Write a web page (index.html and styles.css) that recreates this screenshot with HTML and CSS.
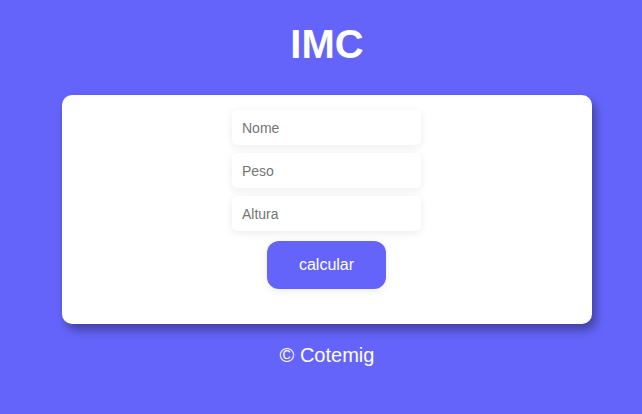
FILE: index.html
```html
<!DOCTYPE html>
<html lang="pt">
<head>
<meta charset="utf-8">
<title>IMC</title>
<link rel="stylesheet" href="styles.css">
</head>
<body>
<div class="page">
  <h1 class="title">IMC</h1>
  <div class="card">
    <form class="form">
      <input class="field" type="text" placeholder="Nome">
      <input class="field" type="text" placeholder="Peso">
      <input class="field" type="text" placeholder="Altura">
      <button class="btn" type="button">calcular</button>
    </form>
  </div>
  <footer class="footer">© Cotemig</footer>
</div>
</body>
</html>
```
FILE: styles.css
```css
html, body {
  margin: 0;
  padding: 0;
  background: #6464fb;
  font-family: "Liberation Sans", Arial, sans-serif;
}
.page {
  padding: 21px 0 0 12px;
  display: flex;
  flex-direction: column;
  align-items: center;
}
.title {
  margin: 0;
  font-size: 40px;
  line-height: 46px;
  font-weight: bold;
  color: #fff;
}
.card {
  margin-top: 28px;
  width: 530px;
  box-sizing: border-box;
  background: #fff;
  border-radius: 10px;
  box-shadow: 4px 6px 10px rgba(0, 0, 0, 0.35);
  padding: 15px 1px 35px 0;
}
.form {
  display: flex;
  flex-direction: column;
  align-items: center;
  gap: 8px;
}
.field {
  width: 189px;
  height: 35px;
  box-sizing: border-box;
  border: none;
  outline: none;
  border-radius: 5px;
  padding: 0 10px;
  font-family: "Liberation Sans", Arial, sans-serif;
  font-size: 14px;
  color: #333;
  background: #fff;
  box-shadow: 0 2px 8px rgba(0, 0, 0, 0.08);
}
.field::placeholder {
  color: #757575;
}
.btn {
  margin-top: 2px;
  width: 119px;
  height: 48px;
  border: none;
  border-radius: 12px;
  background: #6464fb;
  color: #fff;
  font-family: "Liberation Sans", Arial, sans-serif;
  font-size: 16px;
  box-shadow: 0 2px 8px rgba(0, 0, 0, 0.08);
  cursor: pointer;
}
.footer {
  margin-top: 20px;
  font-size: 20px;
  line-height: 23px;
  color: #fff;
}
```
